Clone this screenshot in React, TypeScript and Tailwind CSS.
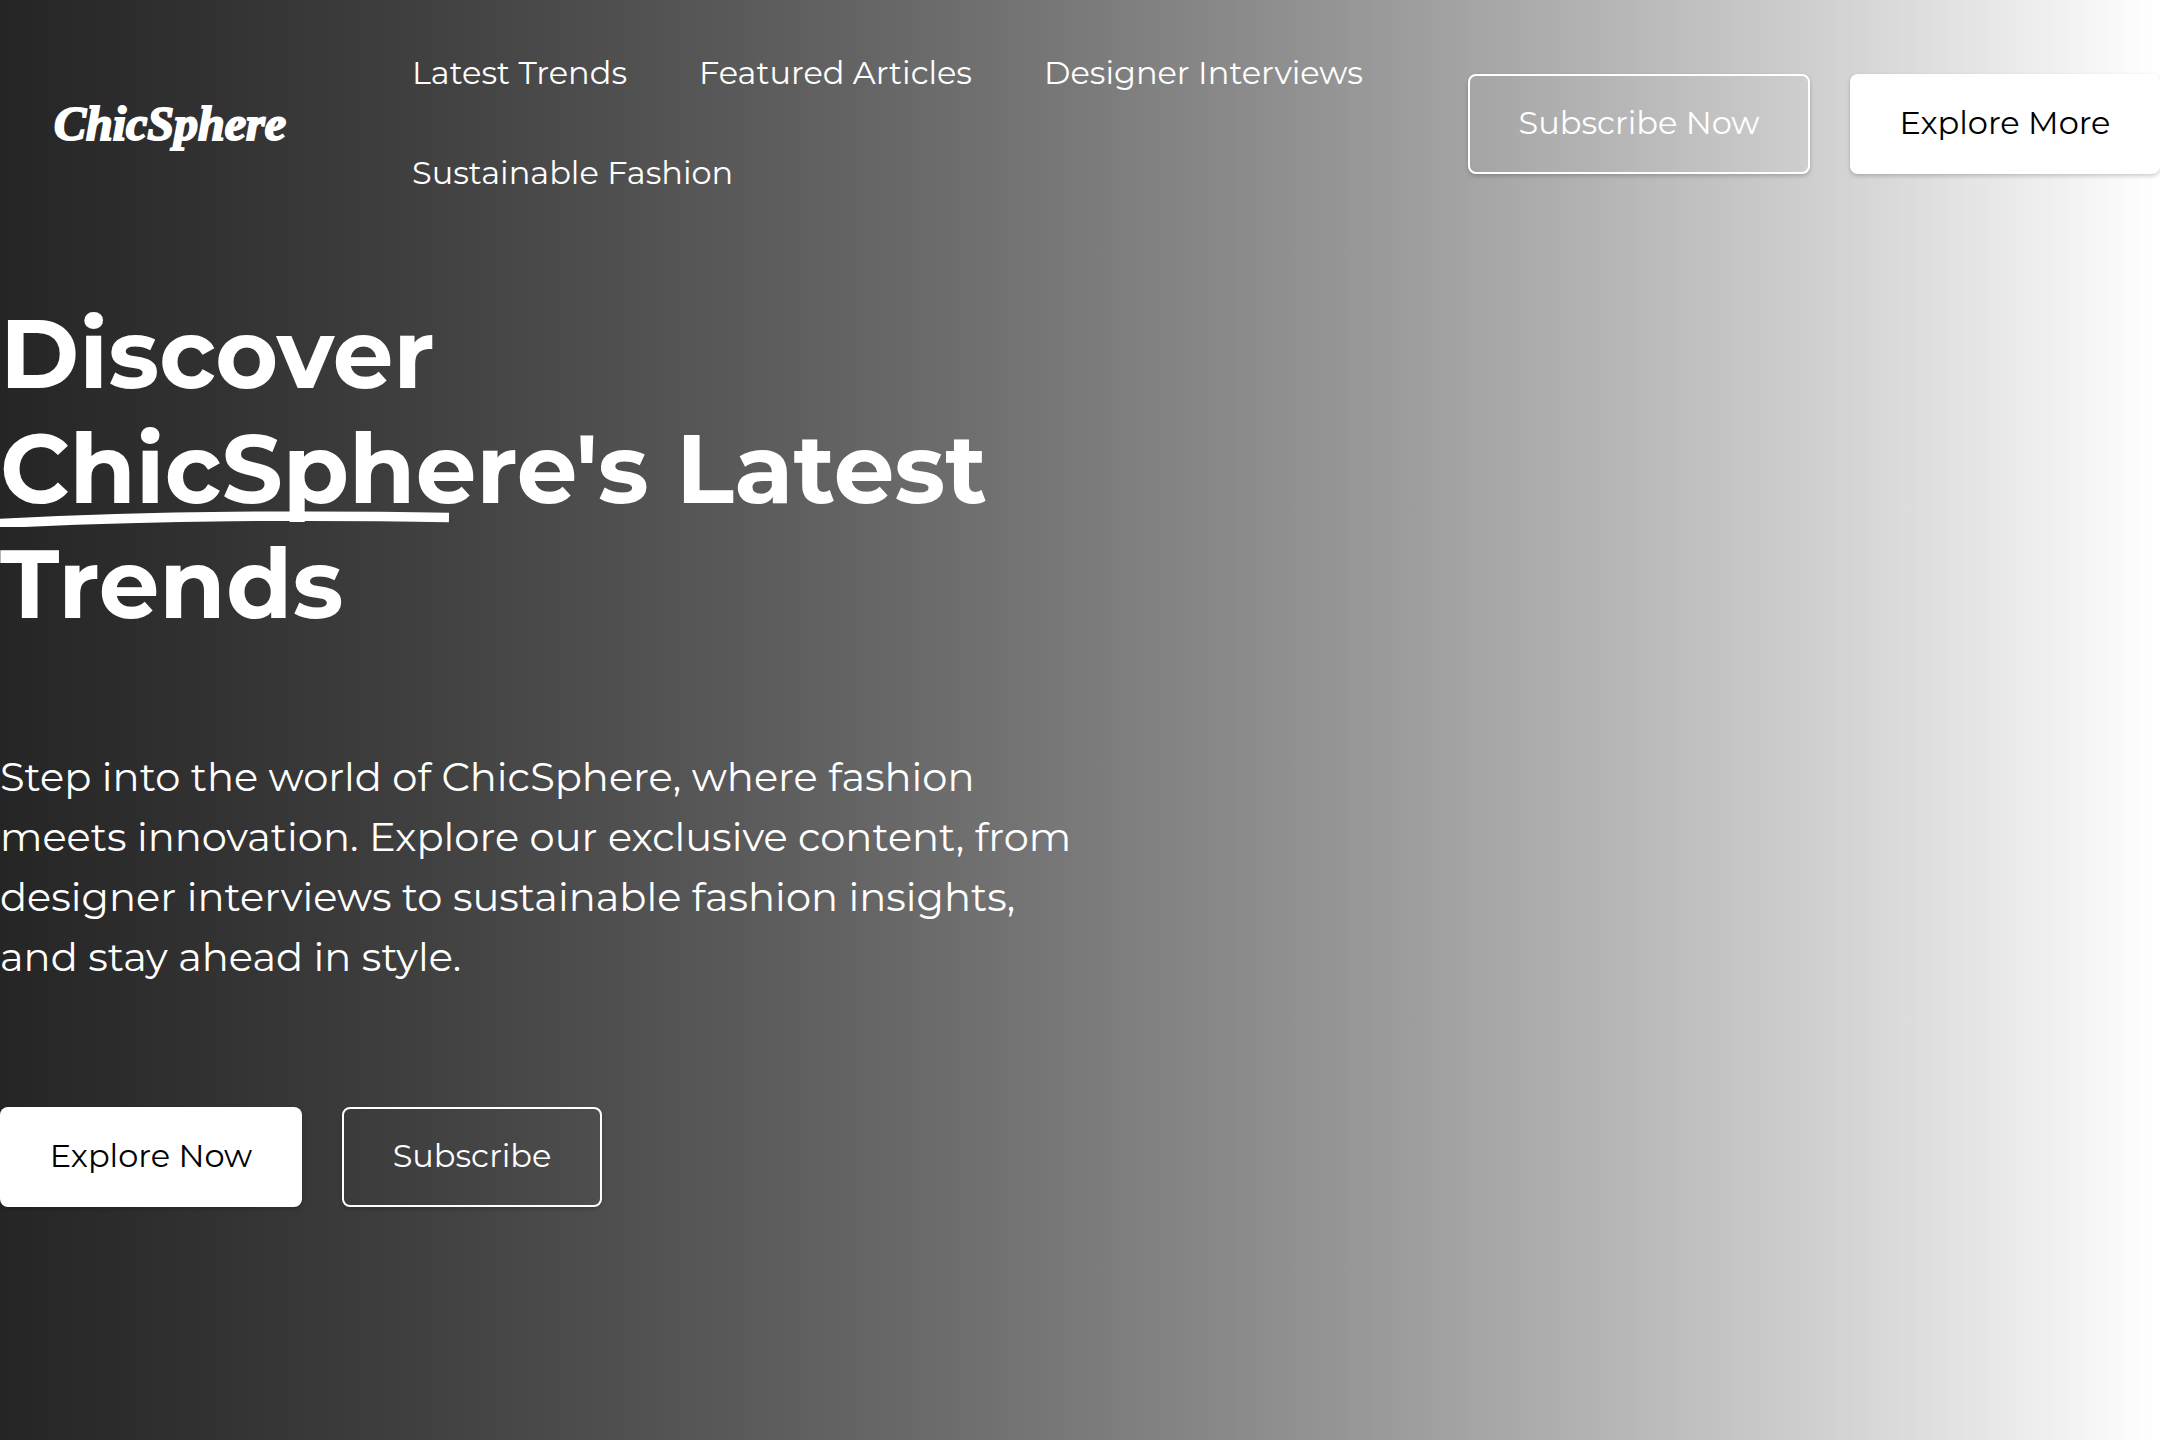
import React from "react";

const links = [
  { name: "Latest Trends", href: "#trends" },
  { name: "Featured Articles", href: "#articles" },
  { name: "Designer Interviews", href: "#interviews" },
  { name: "Sustainable Fashion", href: "#sustainable" },
];

const Header = () => {
  return (
    <header className="flex items-center pt-6">
      <a
        href="#home"
        className="w-[412px] shrink-0 pl-[54px] font-['Liberation_Serif',serif] text-[48px] leading-none font-bold italic [-webkit-text-stroke:2px_white]"
      >
        ChicSphere
      </a>
      <nav className="flex grow flex-wrap gap-x-[72px]">
        {links.map((link) => (
          <a
            key={link.name}
            href={link.href}
            className="pt-[26px] pb-[28px] leading-[46px]"
          >
            {link.name}
          </a>
        ))}
      </nav>
      <div className="flex shrink-0 gap-10">
        <button className="h-[100px] w-[342px] rounded-lg border-2 border-white pb-[2px] shadow-[0_2px_4px_rgba(0,0,0,0.2)]">
          Subscribe Now
        </button>
        <button className="h-[100px] w-[310px] rounded-lg bg-white pb-[2px] text-black shadow-[0_2px_4px_rgba(0,0,0,0.2)]">
          Explore More
        </button>
      </div>
    </header>
  );
};

const Hero = () => {
  return (
    <section className="flex w-1/2 flex-col pt-[72px]">
      <h1 className="text-[96px] leading-[115px] font-bold">
        Discover
        <br />
        <span className="relative whitespace-nowrap">
          ChicSphere's Latest
          <svg
            className="absolute bottom-0 left-0"
            width="450"
            height="24"
            viewBox="0 0 450 24"
            fill="none"
          >
            <path
              d="M-1 20.500Q115 14.500 232 13.500T449 14.500"
              stroke="white"
              strokeWidth="9.500"
            />
          </svg>
        </span>
        <br />
        Trends
      </h1>
      <p className="mt-[106px] text-[40px] leading-[60px]">
        Step into the world of ChicSphere, where fashion meets innovation.
        Explore our exclusive content, from designer interviews to sustainable
        fashion insights, and stay ahead in style.
      </p>
      <div className="mt-[120px] flex gap-10">
        <button className="h-[100px] w-[302px] rounded-lg bg-white pb-[2px] text-black shadow-[0_2px_4px_rgba(0,0,0,0.2)]">
          Explore Now
        </button>
        <button className="h-[100px] w-[260px] rounded-lg border-2 border-white pb-[2px] shadow-[0_2px_4px_rgba(0,0,0,0.2)]">
          Subscribe
        </button>
      </div>
    </section>
  );
};

const App = () => {
  return (
    <main className="min-h-screen bg-white bg-[linear-gradient(to_right,rgba(0,0,0,0.62),transparent),linear-gradient(to_right,rgba(0,0,0,0.62),transparent)] font-[Montserrat,Inter,sans-serif] text-[32px] text-white">
      <Header />
      <Hero />
    </main>
  );
};

export default App;
